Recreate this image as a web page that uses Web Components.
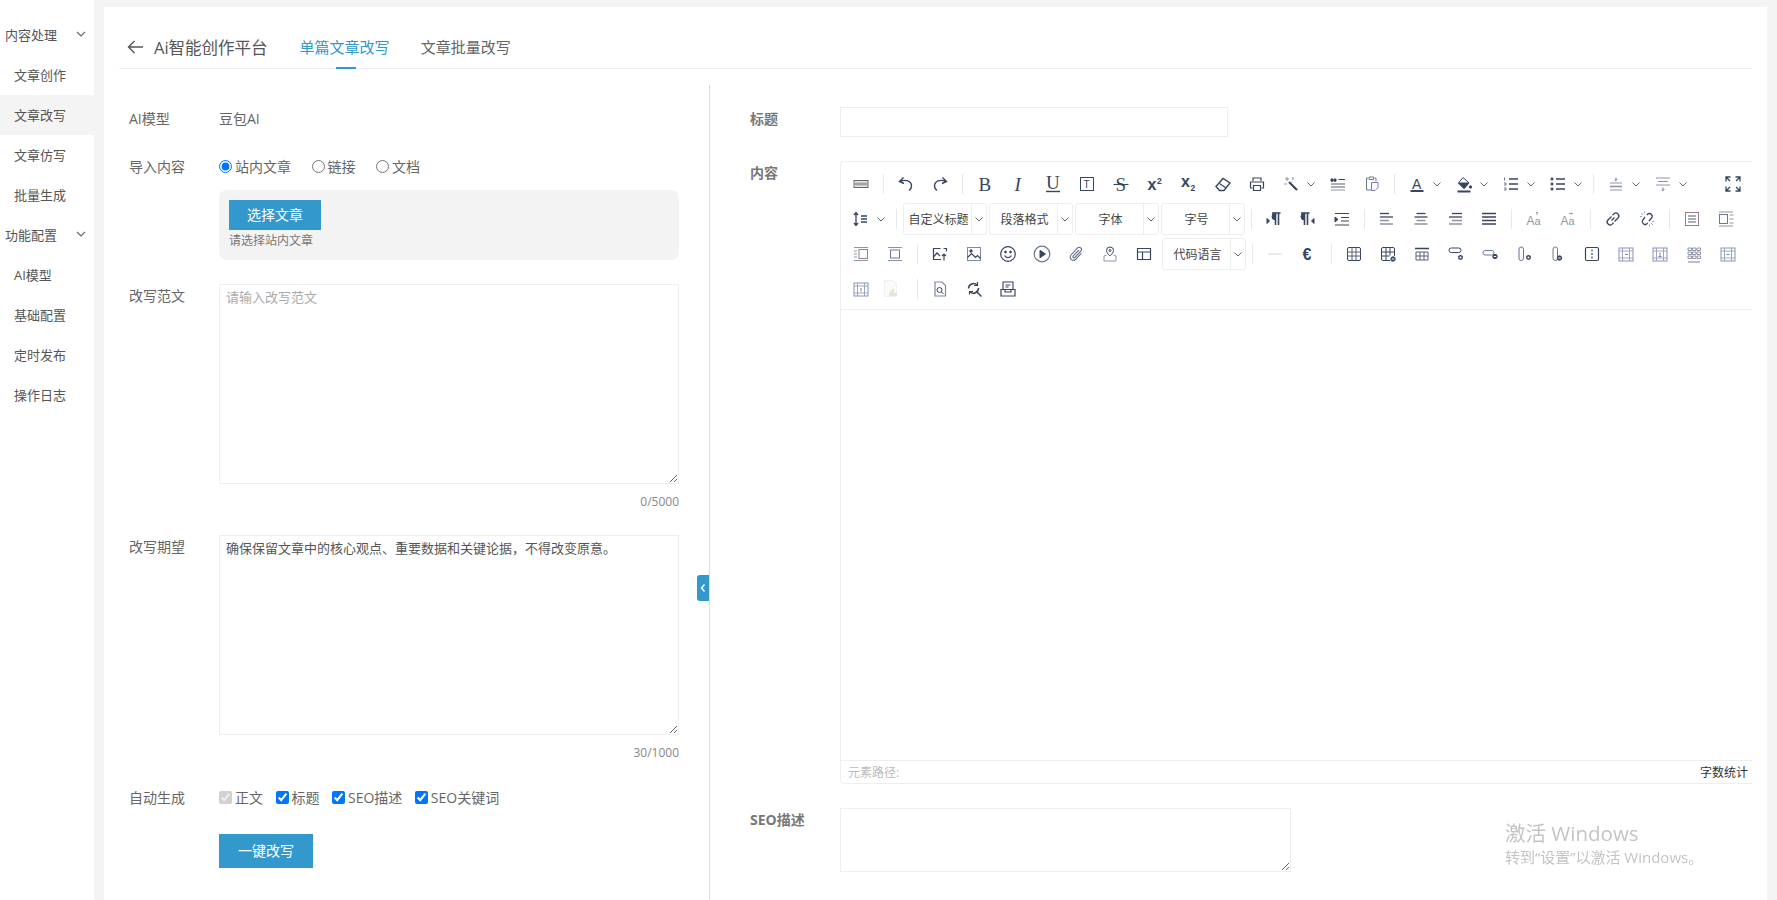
<!DOCTYPE html>
<html lang="zh-CN">
<head>
<meta charset="utf-8">
<title>Ai智能创作平台</title>
<style>
  html, body { height: 100%; }
  body {
    margin: 0;
    display: flex;
    overflow: hidden;
    background: #f4f4f4;
    color: #666;
    font: 14px "Open Sans", "Noto Sans CJK SC", sans-serif;
  }
</style>
</head>
<body>
<side-nav>
  <nav-item group>内容处理</nav-item>
  <nav-item>文章创作</nav-item>
  <nav-item active>文章改写</nav-item>
  <nav-item>文章仿写</nav-item>
  <nav-item>批量生成</nav-item>
  <nav-item group>功能配置</nav-item>
  <nav-item>AI模型</nav-item>
  <nav-item>基础配置</nav-item>
  <nav-item>定时发布</nav-item>
  <nav-item>操作日志</nav-item>
</side-nav>

<page-card>
  <page-head title="Ai智能创作平台">
    <head-tab active>单篇文章改写</head-tab>
    <head-tab>文章批量改写</head-tab>
  </page-head>
  <split-view>
    <div slot="left">
      <form-row label="AI模型">豆包AI</form-row>
      <form-row label="导入内容">
        <choice-group>
          <choice-item type="radio" checked>站内文章</choice-item>
          <choice-item type="radio">链接</choice-item>
          <choice-item type="radio">文档</choice-item>
        </choice-group>
        <pick-box hint="请选择站内文章"><blue-button small>选择文章</blue-button></pick-box>
      </form-row>
      <form-row label="改写范文">
        <text-area placeholder="请输入改写范文" height="200" count="0/5000"></text-area>
      </form-row>
      <form-row label="改写期望">
        <text-area value="确保保留文章中的核心观点、重要数据和关键论据，不得改变原意。" height="200" count="30/1000"></text-area>
      </form-row>
      <form-row label="自动生成">
        <choice-group tight>
          <choice-item type="checkbox" checked disabled>正文</choice-item>
          <choice-item type="checkbox" checked>标题</choice-item>
          <choice-item type="checkbox" checked>SEO描述</choice-item>
          <choice-item type="checkbox" checked>SEO关键词</choice-item>
        </choice-group>
      </form-row>
      <form-row><blue-button>一键改写</blue-button></form-row>
    </div>
    <div slot="right">
      <form-row label="标题" strong wide><text-input></text-input></form-row>
      <form-row label="内容" strong wide><rich-editor></rich-editor></form-row>
      <form-row label="SEO描述" strong wide><text-area height="64" width="451"></text-area></form-row>
    </div>
  </split-view>
</page-card>
<win-mark></win-mark>

<script>
/**
 * Side menu column.
 */
customElements.define('side-nav', class extends HTMLElement {
  constructor () {
    super()
    this.attachShadow({ mode: 'open' }).innerHTML = `
      <style>
        :host { display: block; flex: none; width: 94px; padding-top: 15px; box-sizing: border-box; background: #fff; }
      </style>
      <slot></slot>`
  }
})

customElements.define('nav-item', class extends HTMLElement {
  constructor () {
    super()
    const chevron = this.hasAttribute('group')
      ? '<svg width="10" height="10" viewBox="0 0 10 10"><path d="M1 3l4 4 4-4" fill="none" stroke="#666" stroke-width="1.1"/></svg>'
      : ''
    this.attachShadow({ mode: 'open' }).innerHTML = `
      <style>
        :host { display: flex; align-items: center; justify-content: space-between; box-sizing: border-box; height: 40px; padding: 0 8px 2px 14px; font-size: 13px; color: #555; }
        :host([group]) { padding-left: 5px; }
        :host([active]) { background: #f4f4f4; }
      </style>
      <slot></slot>${chevron}`
  }
})

customElements.define('page-card', class extends HTMLElement {
  constructor () {
    super()
    this.attachShadow({ mode: 'open' }).innerHTML = `
      <style>
        :host { display: flex; flex-direction: column; flex: none; width: 1663px; box-sizing: border-box; margin: 7px 0 0 10px; padding: 0 15px; background: #fff; }
      </style>
      <slot></slot>`
  }
})

customElements.define('page-head', class extends HTMLElement {
  constructor () {
    super()
    this.attachShadow({ mode: 'open' }).innerHTML = `
      <style>
        :host { display: flex; align-items: center; box-sizing: border-box; height: 62px; padding: 19px 0 0 8px; border-bottom: 1px solid #eee; }
        svg { margin-right: 11px; }
        h1 { margin: 0 32px 0 0; font-size: 16.5px; font-weight: 400; color: #555; }
        .tabs { display: flex; gap: 31px; align-self: stretch; }
      </style>
      <svg width="16" height="14" viewBox="0 0 16 14"><path d="M16 7H1.500M7.500 1 1.500 7l6 6" fill="none" stroke="#555" stroke-width="1.400"/></svg>
      <h1>${this.getAttribute('title')}</h1>
      <div class="tabs"><slot></slot></div>`
  }
})

customElements.define('head-tab', class extends HTMLElement {
  constructor () {
    super()
    this.attachShadow({ mode: 'open' }).innerHTML = `
      <style>
        :host { display: flex; align-items: center; position: relative; padding-bottom: 2px; font-size: 15px; color: #666; }
        :host([active]) { color: #3399cc; }
        :host([active])::after { content: ""; position: absolute; left: 36px; bottom: -1px; width: 20px; height: 2px; background: #3399cc; }
      </style>
      <slot></slot>`
  }
})

customElements.define('split-view', class extends HTMLElement {
  constructor () {
    super()
    this.attachShadow({ mode: 'open' }).innerHTML = `
      <style>
        :host { display: flex; flex: 1; margin-top: 16px; }
        .left, .right { display: flex; box-sizing: border-box; }
        .left { position: relative; flex: none; width: 591px; padding: 22px 30px 0 10px; border-right: 1px solid #ddd; }
        .right { flex: 1; padding: 22px 0 0 40px; min-width: 0; }
        ::slotted(div) { display: flex; flex-direction: column; gap: 24px; flex: 1; min-width: 0; }
        .toggle { position: absolute; right: 0; top: 490px; width: 12px; height: 26px; display: flex; align-items: center; justify-content: center; border-radius: 3px 0 0 3px; background: #3399cc; }
      </style>
      <div class="left">
        <slot name="left"></slot>
        <div class="toggle"><svg width="6" height="10" viewBox="0 0 6 10"><path d="M4.500 1.500 1.500 5l3 3.500" fill="none" stroke="#fff" stroke-width="1.400"/></svg></div>
      </div>
      <div class="right"><slot name="right"></slot></div>`
  }
})

customElements.define('form-row', class extends HTMLElement {
  constructor () {
    super()
    const label = this.getAttribute('label') || ''
    this.attachShadow({ mode: 'open' }).innerHTML = `
      <style>
        :host { display: flex; font-size: 14px; line-height: 24px; color: #666; }
        :host([strong]) label { font-weight: 700; color: #777; }
        label { flex: none; width: 90px; }
        .field { flex: 1; min-width: 0; }
      </style>
      <label>${label}</label>
      <div class="field"><slot></slot></div>`
  }
})

customElements.define('choice-group', class extends HTMLElement {
  constructor () {
    super()
    this.attachShadow({ mode: 'open' }).innerHTML = `
      <style>
        :host { display: flex; gap: 20.500px; height: 24px; align-items: center; }
        :host([tight]) { gap: 12.500px; }
      </style>
      <slot></slot>`
  }
})

customElements.define('choice-item', class extends HTMLElement {
  constructor () {
    super()
    const flags = ['checked', 'disabled'].filter(f => this.hasAttribute(f)).join(' ')
    this.attachShadow({ mode: 'open' }).innerHTML = `
      <style>
        :host { display: flex; align-items: center; color: #666; }
        input { width: 13px; height: 13px; margin: -2px 3px 0 0; }
      </style>
      <input type="${this.getAttribute('type')}" ${flags}><slot></slot>`
  }
})

customElements.define('pick-box', class extends HTMLElement {
  constructor () {
    super()
    this.attachShadow({ mode: 'open' }).innerHTML = `
      <style>
        :host { display: block; box-sizing: border-box; height: 70px; margin-top: 11px; padding: 10px; border-radius: 8px; background: #f3f3f3; }
        p { margin: 0; font-size: 12px; line-height: 21px; color: #777; }
      </style>
      <slot></slot>
      <p>${this.getAttribute('hint')}</p>`
  }
})

customElements.define('blue-button', class extends HTMLElement {
  constructor () {
    super()
    this.attachShadow({ mode: 'open' }).innerHTML = `
      <style>
        :host { display: flex; align-items: center; justify-content: center; width: 94px; height: 34px; background: #3399cc; color: #fff; font-size: 14px; }
        :host([small]) { width: 92px; height: 30px; }
      </style>
      <slot></slot>`
  }
})

customElements.define('text-input', class extends HTMLElement {
  constructor () {
    super()
    this.attachShadow({ mode: 'open' }).innerHTML = `
      <style>
        :host { display: block; }
        input { display: block; box-sizing: border-box; width: 388px; height: 30px; border: 1px solid #eee; outline: none; }
      </style>
      <input type="text">`
  }
})

customElements.define('text-area', class extends HTMLElement {
  constructor () {
    super()
    const count = this.getAttribute('count')
    const width = this.getAttribute('width')
    this.attachShadow({ mode: 'open' }).innerHTML = `
      <style>
        :host { display: block; }
        textarea { display: block; box-sizing: border-box; width: ${width ? width + 'px' : '100%'}; height: ${this.getAttribute('height')}px; padding: 3px 6px; border: 1px solid #eee; outline: none; font: 13px/1.5 "Open Sans", "Noto Sans CJK SC", sans-serif; color: #555; }
        textarea::placeholder { color: #aaa; }
        .count { height: 19px; margin-top: 8px; font-size: 12px; line-height: 19px; text-align: right; color: #888; }
      </style>
      <textarea placeholder="${this.getAttribute('placeholder') || ''}">${this.getAttribute('value') || ''}</textarea>
      ${count ? `<div class="count">${count}</div>` : ''}`
  }
})

const cell = '<rect x="3" y="4" width="14" height="13" stroke="#8394b8"/><path d="M3 7h14M3 14h14M6.500 4v13M13.500 4v13" stroke="#9aa6c0"/>'
const grayLines = d => `<path d="${d}" stroke="#8d95a3" stroke-width="1.600"/>`
const darkLines = d => `<path d="${d}" stroke-width="1.300"/>`
const label = (t, x, y, size, extra = '') => `<text x="${x}" y="${y}" font-size="${size}" fill="currentColor" stroke="none" ${extra}>${t}</text>`
const serif = 'font-family="Liberation Serif"'
const sans = 'font-family="Liberation Sans"'

const ICONS = {
  html: '<rect x="3" y="6.500" width="14" height="7" fill="#e8e8e8" stroke="#666"/><path d="M5 8.500v3M7 8.500v3M9 8.500v3M11 8.500v3M13 8.500v3M15 8.500v3" stroke="#4a5568" stroke-width=".9"/>',
  undo: '<path d="M7.500 3.500 3.500 7.500 8 9.500M4 7.500c5.500-2.500 11.500-.5 11.500 4.500 0 2-1 3.500-2.500 4.500" stroke-width="1.400"/>',
  redo: '<path transform="matrix(-1 0 0 1 20 0)" d="M7.500 3.500 3.500 7.500 8 9.500M4 7.500c5.500-2.500 11.500-.5 11.500 4.500 0 2-1 3.500-2.500 4.500" stroke-width="1.400"/>',
  bold: label('B', 3.500, 16.500, 19, serif),
  italic: label('I', 5.500, 16.500, 19, serif + ' font-style="italic"'),
  underline: label('U', 3, 15, 19, serif) + '<path d="M3 17.500h14" stroke-width="1.400"/>',
  fontborder: '<rect x="3.500" y="3.500" width="13" height="13"/>' + label('T', 6.600, 14, 10, sans),
  strike: label('S', 4.500, 16.500, 19, serif) + '<path d="M2.500 10.500h15" stroke-width="1.100"/>',
  sup: label('x', 2.500, 15.500, 16, sans + ' font-weight="700"') + label('2', 12, 9.500, 8.500, sans + ' font-weight="700"'),
  sub: label('x', 2, 13, 16, sans + ' font-weight="700"') + label('2', 11.500, 16.500, 8.500, sans + ' font-weight="700"'),
  eraser: '<path d="M3 12.500 10 4.500l7 4.500-6 7.500H6.500z" stroke-width="1.400"/><path d="M6.500 9.500l6.500 4.500" stroke-width="1.200"/>',
  print: '<path d="M6 7V4h8v3M5.500 14h-2V8h13v6h-2M6.500 11.500h7v5h-7z" stroke-width="1.200"/>',
  wand: '<path d="M8 8l8 8" stroke-width="2.200"/><path d="M6 3v4M4 5h4M12 3v3M3 10h3M11 7.500l-1.500 1.500" stroke="#8d95a3"/>',
  quote: '<path d="M3 5h2v2.200H3zM6 5h2v2.200H6z" fill="currentColor"/><path d="M10.500 5.500h6.500"/>' + grayLines('M3 10h14M3 13h14') + '<path d="M3 16h14" stroke="#8d95a3"/>',
  paste: '<path d="M6 4H4.500v12H9M7 3h4.500v2.500H7zM12.500 4H14v3.500" stroke="#6b7a90"/><path d="M9.500 8.500H16v5l-3 3H9.500z" stroke="#7d77b0"/>',
  color: label('A', 5, 14.500, 14, sans) + '<path d="M3.500 17h13" stroke-width="2"/>',
  fill: '<path d="M9 3.500 15 9l-5 5.500L4.500 9z"/><path d="M4.500 9H15l-5 5.500z" fill="currentColor"/><circle cx="16.500" cy="13" r="1.200" fill="currentColor"/><path d="M3.500 17.500h13" stroke-width="2"/>',
  ol: '<path d="M8 5h9M8 10h9M8 15h9" stroke-width="1.500"/><path d="M3.500 3.500v3M3 9h2v2H3M3 14h2v2H3" stroke="#6b7a90"/>',
  ul: '<circle cx="4" cy="5" r="1.100" fill="currentColor"/><circle cx="4" cy="10" r="1.100" fill="currentColor"/><circle cx="4" cy="15" r="1.100" fill="currentColor"/><path d="M8 5h9M8 10h9M8 15h9" stroke-width="1.500"/>',
  rowtop: '<path d="M10 3.500v3M8.800 5.500l1.200 1.200 1.200-1.200" stroke="#6b7a90"/><path d="M4 9h12" stroke="#8d95a3"/>' + grayLines('M4 12.500h12') + '<path d="M4 16h12" stroke="#8d95a3"/>',
  rowbottom: '<path d="M3 4h14M5 7.500h10" stroke="#8d95a3"/><path d="M3 11h14" stroke="#8d95a3"/><path d="M10 13.500v3M8.800 15.500l1.200 1.200 1.200-1.200" stroke="#6b7a90"/>',
  full: '<path d="M3 7.500V3h4.500M3 3l4 4M12.500 3H17v4.500M17 3l-4 4M3 12.500V17h4.500M3 17l4-4M17 12.500V17h-4.500M17 17l-4-4" stroke-width="1.300"/>',
  lineheight: '<path d="M5 3.500v13M3 6l2-2.500L7 6M3 14l2 2.500L7 14" stroke-width="1.300"/><path d="M10 7h6M10 10h6M10 13h6" stroke-width="1.300"/>',
  ltr: '<path d="M8 4h8.500M11.500 4v12M14.500 4v12" stroke-width="1.600"/><path d="M11.500 4a3.500 3.500 0 0 0 0 7z" fill="currentColor"/><path d="M3 9.500v5l2.500-2.500z" fill="currentColor"/>',
  rtl: '<path d="M3 4h8.500M6.500 4v12M9.500 4v12" stroke-width="1.600"/><path d="M6.500 4a3.500 3.500 0 0 0 0 7z" fill="currentColor"/><path d="M16 9.500v5L13.500 12z" fill="currentColor"/>',
  indent: '<path d="M3 4.500h14M9 8.500h8M9 12h8M3 16h14" stroke-width="1.200"/><path d="M3 8l3 2.500L3 13z" fill="currentColor"/>',
  left: darkLines('M3 4.500h9') + darkLines('M3 8h13') + grayLines('M3 11.500h9M3 15h13'),
  center: darkLines('M5.500 4.500h9') + darkLines('M3.500 8h13') + grayLines('M5.500 11.500h9M3.500 15h13'),
  right: darkLines('M7 4.500h10') + darkLines('M4 8h13') + grayLines('M7 11.500h10M4 15h13'),
  justify: '<path d="M3 4.500h14M3 8h14M3 11.500h14M3 15h14" stroke-width="1.500"/>',
  caseup: '<g color="#8d97a6">' + label('A', 2.500, 16, 12, sans) + label('a', 10.500, 16, 11, sans) + '<path d="M13 6V3M11.800 4.200 13 3l1.200 1.200" stroke="#8d97a6" stroke-width=".9"/></g>',
  casedown: '<g color="#8d97a6">' + label('A', 2.500, 16, 12, sans) + label('a', 10.500, 16, 11, sans) + '<path d="M11 4.500h3.500M13.500 3.500l1 1-1 1" stroke="#8d97a6" stroke-width=".9"/></g>',
  link: '<path d="M8.500 11.500l3-3M8.500 7.500 5 11a2.900 2.900 0 0 0 4.100 4.100l1.400-1.400M11.500 12.500 15 9a2.900 2.900 0 0 0-4.100-4.100L9.500 6.300" stroke-width="1.300"/>',
  unlink: '<path d="M8 8 5.500 11.500a2.900 2.900 0 0 0 4.100 3.600l1.200-1.200M12 12l3-3.500a2.900 2.900 0 0 0-4.100-3.600L9.800 6" stroke-width="1.300"/><path d="M4 4l2 2M7.500 2.500v2M3 7.500h2M16 16l-2-2M12.500 17.500v-2M17 12.500h-2" stroke="#8d95a3" stroke-width=".9"/>',
  imgnone: '<rect x="3.500" y="3.500" width="13" height="13" stroke="#a07a88"/>' + grayLines('M6 7h8M6 10h8M6 13h8'),
  imgleft: '<rect x="3.500" y="5.500" width="8" height="9" stroke="#6b7a90"/><path d="M3 3h14M3 17h14M13.500 6h4M13.500 10h4M13.500 14h4" stroke="#8d95a3"/>',
  imgright: '<rect x="8" y="5.500" width="8.500" height="9" stroke="#a07a88"/><path d="M3 3.500h14M3 7h3M3 10h3M3 13h3M3 16.500h14" stroke="#8d95a3"/>',
  imgcenter: '<path d="M3 3.500h14M3 16.500h14" stroke="#8d95a3"/><rect x="5.500" y="6" width="9" height="8" stroke="#6b7a90"/>',
  upload: '<path d="M10.500 4.500h-7v11H11M3.500 13l3.500-4 3 3M14 16.500V10M12 12l2-2 2 2M13.500 4.500h3v3" stroke-width="1.200"/>',
  image: '<rect x="3.500" y="3.500" width="13" height="13" stroke="#7d8aa3"/><path d="M3.500 13.500l4-4 4 4 2-2 3 3" stroke-width="1.200"/><circle cx="7" cy="7" r="1.200" fill="currentColor"/>',
  emoji: '<circle cx="10" cy="10" r="7.300" stroke-width="1.200"/><circle cx="7.500" cy="8" r=".9" fill="currentColor"/><circle cx="12.500" cy="8" r=".9" fill="currentColor"/><path d="M6.500 11.500c1.500 2.700 5.500 2.700 7 0" stroke-width="1.200"/>',
  video: '<circle cx="10" cy="10" r="7.800" stroke="#6b7a90" stroke-width="1.200"/><path d="M8 6.300v7.400l5.500-3.700z" fill="currentColor"/>',
  attach: '<path d="M15.500 9 9.500 15.500A3.200 3.200 0 0 1 5 11l6.500-7a2.300 2.300 0 0 1 3.300 3.200l-6 6.300a1.100 1.100 0 0 1-1.600-1.600L13 6" stroke="#5f6f8c" stroke-width="1.100"/>',
  map: '<path d="M10 3a3.500 3.500 0 0 1 3.500 3.500c0 2.500-3.500 5.500-3.500 5.500S6.500 9 6.500 6.500A3.500 3.500 0 0 1 10 3z"/><circle cx="10" cy="6.500" r="1"/><path d="M6.500 11 4 12v5h12v-5l-2.500-1" stroke="#8d95a3"/>',
  template: '<path d="M3.500 4.500h13v11h-13zM3.500 8h13M8.500 8v7.500" stroke-width="1.200"/>',
  hr: '<path d="M3 10h14" stroke="#dfe3ea" stroke-width="1.500"/>',
  euro: label('€', 3.500, 16, 16, sans + ' font-weight="700"'),
  table: '<rect x="3.500" y="3.500" width="13" height="13" rx="1.500"/><path d="M3.500 8h13M3.500 12h13M8 3.500v13M12 3.500v13" stroke="#55627a"/>',
  tableminus: '<path d="M12 16.500H5a1.500 1.500 0 0 1-1.500-1.500V5A1.500 1.500 0 0 1 5 3.500h10A1.500 1.500 0 0 1 16.500 5v7M3.500 8h13M3.500 12h8M8 3.500v13M12 3.500v8"/><circle cx="15" cy="15" r="2.200" fill="currentColor"/><path d="M13.800 15h2.400" stroke="#fff"/>',
  tablehead: '<path d="M3 4.500h14" stroke-width="1.500"/><path d="M4 8h12v8H4zM4 12h12M8 8v8M12 8v8" stroke="#55627a"/>',
  rowins: '<rect x="3" y="4" width="12" height="4.500" rx="2.200"/><circle cx="14.500" cy="13.500" r="1.800" stroke-width="1.400"/>',
  rowdel: '<rect x="3" y="6.500" width="11" height="4.500" rx="2.200" stroke="#6b7a90"/><circle cx="15" cy="12.500" r="2.200" fill="currentColor"/><path d="M13.800 12.500h2.400" stroke="#fff"/>',
  colins: '<rect x="5" y="3" width="4.500" height="13.500" rx="2.200" stroke="#7d5fa0"/><circle cx="14.500" cy="13.500" r="1.800" stroke-width="1.400"/>',
  coldel: '<rect x="5" y="3" width="4.500" height="13.500" rx="2.200" stroke="#6b7a90"/><circle cx="11.500" cy="14" r="2.200" fill="currentColor"/><path d="M10.300 14h2.400" stroke="#fff"/>',
  split: '<rect x="3.500" y="3.500" width="13" height="13" rx="1.500" stroke-width="1.200"/><path d="M10 5.500v2M10 9v2M10 12.500v2" stroke-width="1.200"/>',
  cell1: cell + '<path d="M9 10.500h3" stroke="#7a8598"/>',
  cell2: cell + '<path d="M10 8.500v4M8.500 12.500h3" stroke="#7a8598"/>',
  cell3: '<path d="M4 4h3.500v2.500H4zM8.500 4H12v2.500H8.500zM13 4h3.500v2.500H13zM4 8h3.500v2.500H4zM8.500 8H12v2.500H8.500zM13 8h3.500v2.500H13zM4 12h3.500v2.500H4zM8.500 12H12v2.500H8.500zM13 12h3.500v2.500H13z" stroke="#7a7f98" stroke-width=".8"/><path d="M4 18h12" stroke="#8d95a3" stroke-width="1.200"/>',
  cell4: cell + '<path d="M8.500 10.500h3" stroke="#7a8598"/>',
  cell5: cell + '<path d="M10 9v3.500" stroke="#7a8598"/>',
  chart: '<g transform="translate(-4 0)"><path d="M3.500 1.500h9l3 3v13h-12z" fill="#fafafa" stroke="#f0f0f0"/><path d="M9.500 17v-5" stroke="#dfe8d0" stroke-width="2.500"/><path d="M12 17v-7" stroke="#e8e4c8" stroke-width="2.500"/><path d="M14.500 17v-3" stroke="#d4e4ec" stroke-width="2.500"/></g>',
  preview: '<path d="M5 3h7l3.500 3.500V17H5z" stroke="#7d8aa3" stroke-width="1.200"/><circle cx="9.500" cy="11" r="2.500"/><path d="M11.500 13l2 2"/>',
  search: '<path d="M4.500 9.500a5 5 0 0 1 8.500-3.500M14.500 9a5 5 0 0 1-8.500 3.700" stroke-width="1.500"/><path d="M13.500 3v3.500H10M5.500 15.500V12.500H9" stroke-width="1.200"/><path d="M13 13l4.500 4.500" stroke-width="1.500"/>',
  drafts: '<path d="M5 3h10v7.500H5zM7.500 6h5M7.500 8h3" stroke-width="1.100"/><path d="M3 10.500h4V13h6v-2.500h4V17H3z" stroke-width="1.200"/>'
}

// '|' is a separator, 'name:' has a dropdown arrow, '[text]' is a select box.
const TOOLS = [
  'html', '|', 'undo', 'redo', '|', 'bold', 'italic', 'underline', 'fontborder', 'strike', 'sup', 'sub', 'eraser', 'print', 'wand:', 'quote', 'paste', '|',
  'color:', 'fill:', 'ol:', 'ul:', '|', 'rowtop:', 'rowbottom:', 'full!',
  'lineheight:', '|', '[自定义标题]', '[段落格式]', '[字体]', '[字号]', '|', 'ltr', 'rtl', 'indent', '|', 'left', 'center', 'right', 'justify', '|', 'caseup', 'casedown', '|', 'link', 'unlink', '|', 'imgnone', 'imgleft',
  'imgright', 'imgcenter', '|', 'upload', 'image', 'emoji', 'video', 'attach', 'map', 'template', '[代码语言]', '|', 'hr', 'euro', '|',
  'table', 'tableminus', 'tablehead', 'rowins', 'rowdel', 'colins', 'coldel', 'split', 'cell1', 'cell2', 'cell3', 'cell4',
  'cell5', 'chart', '|', 'preview', 'search', 'drafts'
]

const chevron = '<svg width="10" height="10" viewBox="0 0 10 10"><path d="M1.500 3.500 5 7l3.500-3.500" fill="none" stroke="#5b6b85" stroke-width="1"/></svg>'

/**
 * Turns one toolbar entry into its markup.
 *
 * @param {string} tool - The entry from TOOLS.
 * @returns {string} The markup.
 */
function toolMarkup (tool) {
  if (tool === '|') return '<i class="sep"></i>'
  if (tool.startsWith('[')) {
    return `<div class="combo"><span>${tool.slice(1, -1)}</span><b>${chevron}</b></div>`
  }
  const name = tool.replace(/[:!]$/, '')
  const icon = `<span class="btn"><svg width="20" height="20" viewBox="0 0 20 20" fill="none" stroke="currentColor" overflow="visible">${ICONS[name]}</svg></span>`
  if (tool.endsWith(':')) return `<div class="drop">${icon}${chevron}</div>`
  if (tool.endsWith('!')) return `<div class="end">${icon}</div>`
  return icon
}

customElements.define('rich-editor', class extends HTMLElement {
  constructor () {
    super()
    this.attachShadow({ mode: 'open' }).innerHTML = `
      <style>
        :host { display: flex; flex-direction: column; box-sizing: border-box; height: 623px; border: 1px solid #eee; border-right: none; border-radius: 4px 0 0 4px; color: #36465f; line-height: normal; }
        .bar { display: flex; flex-wrap: wrap; align-content: flex-start; box-sizing: border-box; height: 148px; padding: 4px 0 3px 3px; border-bottom: 1px solid #eee; }
        .btn { display: flex; align-items: center; justify-content: center; flex: none; width: 34px; height: 35px; }
        .btn svg { overflow: visible; }
        .drop { display: flex; align-items: center; height: 35px; }
        .drop > svg { margin: 0 5px 0 -2px; }
        .end { margin-left: auto; margin-right: 2px; }
        .sep { flex: none; width: 11px; height: 35px; background: linear-gradient(#e8e8e8, #e8e8e8) center / 1px 20px no-repeat; }
        .combo { display: flex; box-sizing: border-box; flex: none; width: 84px; height: 32px; margin: 1.500px 1px; border: 1px solid #eee; border-radius: 3px; font-size: 12px; color: #444; }
        .combo span { flex: 1; display: flex; align-items: center; justify-content: center; padding-left: 2px; white-space: nowrap; }
        .combo b { flex: none; width: 14px; display: flex; align-items: center; justify-content: center; border-left: 1px solid #eee; }
        .body { flex: 1; }
        .foot { display: flex; justify-content: space-between; align-items: center; box-sizing: border-box; height: 23px; padding: 0 4px 0 7px; border-top: 1px solid #eee; font-size: 12px; color: #333; }
        .foot span:first-child { color: #bbb; }
      </style>
      <div class="bar">${TOOLS.map(toolMarkup).join('')}</div>
      <div class="body"></div>
      <div class="foot"><span>元素路径:</span><span>字数统计</span></div>`
  }
})

customElements.define('win-mark', class extends HTMLElement {
  constructor () {
    super()
    this.attachShadow({ mode: 'open' }).innerHTML = `
      <style>
        :host { position: fixed; left: 1505px; top: 820px; color: #c4c4c4; white-space: nowrap; }
        div { font-size: 20.500px; line-height: 26px; }
        p { margin: 0; font-size: 15px; line-height: 22px; }
      </style>
      <div>激活 Windows</div>
      <p>转到“设置”以激活 Windows。</p>`
  }
})
</script>
</body>
</html>
